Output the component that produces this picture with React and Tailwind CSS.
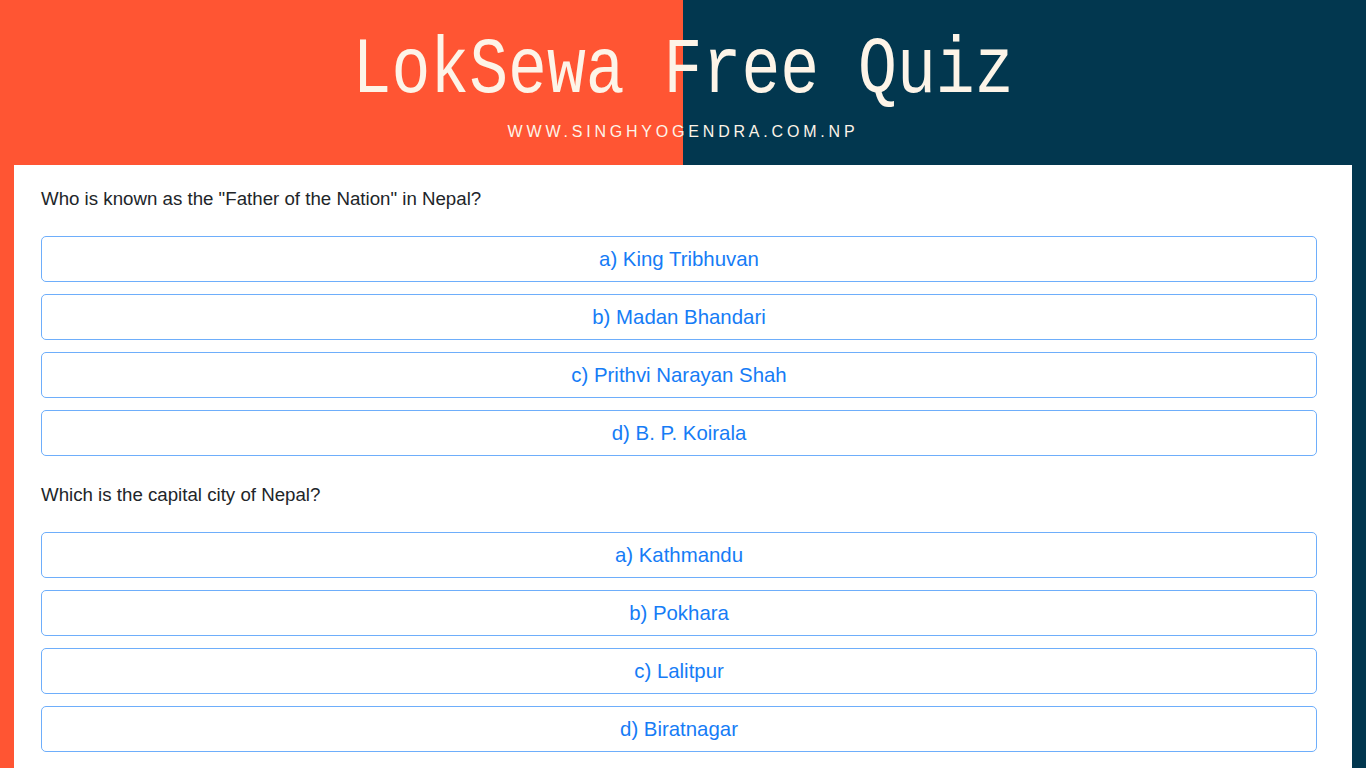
export default function App() {
  const quizzes = [
    {
      q: 'Who is known as the "Father of the Nation" in Nepal?',
      opts: ["a) King Tribhuvan", "b) Madan Bhandari", "c) Prithvi Narayan Shah", "d) B. P. Koirala"],
    },
    {
      q: "Which is the capital city of Nepal?",
      opts: ["a) Kathmandu", "b) Pokhara", "c) Lalitpur", "d) Biratnagar"],
    },
  ];
  return (
    <div className="relative w-[1366px] h-[768px] overflow-hidden flex">
      <div className="absolute inset-0 flex">
        <div className="w-[683px] h-full bg-[#ff5533]" />
        <div className="flex-1 h-full bg-[#02374f]" />
      </div>
      <div className="relative w-full flex flex-col">
        <div className="h-[165px] flex flex-col items-center">
          <div
            className="mt-[28px] h-[86px] flex items-center justify-center text-[80px] leading-none text-[#fdf4e8] scale-x-[0.81] whitespace-nowrap"
            style={{ fontFamily: '"Liberation Mono", monospace' }}
          >
            LokSewa Free Quiz
          </div>
          <div
            className="mt-[10px] text-[16px] leading-none tracking-[3.8px] text-[#fdf4e8]"
            style={{ fontFamily: '"Liberation Sans", Arial, sans-serif' }}
          >
            WWW.SINGHYOGENDRA.COM.NP
          </div>
        </div>
        <div
          className="mx-[14px] flex-1 bg-white pl-[27px] pr-[35px] pt-[21px]"
          style={{ fontFamily: '"Liberation Sans", Arial, sans-serif' }}
        >
          {quizzes.map((qz, i) => (
            <div key={i} className={i > 0 ? "mt-[26px]" : ""}>
              <div className="text-[18.7px] leading-[25px] text-[#212529]">{qz.q}</div>
              <div className="mt-[25px] flex flex-col gap-[12px]">
                {qz.opts.map((o) => (
                  <div
                    key={o}
                    className="h-[46px] rounded-[5px] border border-[#6eaefb] flex items-center justify-center text-[20.4px] text-[#167cf6]"
                  >
                    {o}
                  </div>
                ))}
              </div>
            </div>
          ))}
        </div>
      </div>
    </div>
  );
}
